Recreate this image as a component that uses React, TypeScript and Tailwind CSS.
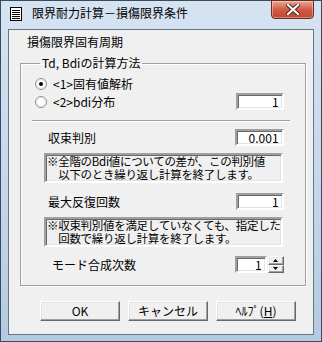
import clsx from 'clsx'

const font = 'font-["Noto_Sans_CJK_JP","Noto_Sans",sans-serif]'
const sunken =
  'border-2 border-t-[#a0a0a0] border-l-[#a0a0a0] border-b-white border-r-white shadow-[inset_1px_1px_0_#696969,inset_-1px_-1px_0_#e3e3e3]'
const raised =
  'border border-t-white border-l-white border-b-[#696969] border-r-[#696969] shadow-[inset_-1px_-1px_0_#a0a0a0,inset_1px_1px_0_#e3e3e3] bg-[#f0f0f0]'

function Radio({ checked }: { checked?: boolean }) {
  return (
    <svg width="12" height="12" viewBox="0 0 12 12" className="shrink-0">
      <circle cx="6" cy="6" r="5.5" fill="#fff" stroke="#8d8d8d" />
      <circle cx="6" cy="6" r="4.5" fill="none" stroke="#e0e0e0" />
      {checked && <circle cx="6" cy="6" r="2" fill="#000" />}
    </svg>
  )
}

function NumBox({ value, w = 'w-[48px]' }: { value: string; w?: string }) {
  return (
    <div className={clsx(sunken, w, 'h-[17px] bg-white flex items-center justify-end pr-[3px] text-[12px] leading-[13px]')}>
      {value}
    </div>
  )
}

function Note({ lines }: { lines: string[] }) {
  return (
    <div className={clsx(sunken, 'h-[30px] ml-[9px] mr-[1px] pl-[1px] text-[11.5px] leading-[13px] tracking-[-0.3px] whitespace-nowrap overflow-hidden')}>
      {lines.map((l) => (
        <div key={l}>{l}</div>
      ))}
    </div>
  )
}

export default function App() {
  return (
    <div className={clsx(font, 'w-[322px] h-[342px] border border-[#3b4b5e] bg-gradient-to-b from-[#d6e3f1] via-[#c6d8ec] to-[#b4cae2] flex flex-col text-black')}>
      {/* title bar */}
      <div className="h-[28px] flex items-start shrink-0">
        <svg width="12" height="14" viewBox="0 0 12 14" className="ml-[9px] mt-[6px]">
          <rect x="0.5" y="0.5" width="11" height="13" fill="#fff" stroke="#000" />
          {[3, 5, 7, 9, 11].map((y) => (
            <line key={y} x1="2" x2="10" y1={y + 0.5} y2={y + 0.5} stroke="#000" />
          ))}
        </svg>
        <span className="ml-[10px] mt-[5px] text-[12px] leading-[14px]">限界耐力計算－損傷限界条件</span>
        <div className="ml-auto mr-[7px] -mt-px w-[43px] h-[19px] rounded-b-[4px] border border-[#6e2a20] bg-gradient-to-b from-[#e7a898] via-[#d05b44] to-[#c2462c] shadow-[inset_0_0_0_1px_rgba(255,255,255,0.35)] flex items-center justify-center">
          <svg width="14" height="11" viewBox="0 0 14 11">
            <path d="M2 1 L12 10 M12 1 L2 10" stroke="#4a1f18" strokeWidth="4" strokeLinecap="square" />
            <path d="M2 1 L12 10 M12 1 L2 10" stroke="#fff" strokeWidth="2.2" strokeLinecap="square" />
          </svg>
        </div>
      </div>

      {/* client area */}
      <div className="mx-[7px] h-[306px] shrink-0 border border-[#66768a] bg-[#f0f0f0] flex flex-col">
        <div className="pl-[18px] pt-[5px] text-[12px] leading-[14px]">損傷限界固有周期</div>

        <fieldset className="mt-[7px] ml-[11px] w-[279px] border border-[#a0a0a0] shadow-[inset_1px_1px_0_#fff,1px_1px_0_#fff] pb-[12px] pl-[14px] pr-[21px] text-[12px]">
          <legend className="ml-[5px] px-[2px] leading-[14px]">Td, Bdiの計算方法</legend>

          <div className="mt-[7px] h-[14px] flex items-center gap-[6px] leading-[14px]">
            <Radio checked />
            <span>&lt;1&gt;固有値解析</span>
          </div>

          <div className="mt-[2px] h-[17px] flex items-center justify-between leading-[14px]">
            <div className="flex items-center gap-[6px]">
              <Radio />
              <span>&lt;2&gt;bdi分布</span>
            </div>
            <NumBox value="1" />
          </div>

          <div className="mt-[10px] -ml-[3px] -mr-[6px] border-t border-b border-t-[#a0a0a0] border-b-white" />

          <div className="mt-[7px] h-[17px] flex items-center justify-between leading-[14px]">
            <span className="ml-[13px]">収束判別</span>
            <NumBox value="0.001" w="w-[49px]" />
          </div>

          <div className="mt-[7px]">
            <Note lines={['※全階のBdi値についての差が、この判別値', '　以下のとき繰り返し計算を終了します。']} />
          </div>

          <div className="mt-[10px] h-[17px] flex items-center justify-between leading-[14px]">
            <span className="ml-[13px]">最大反復回数</span>
            <NumBox value="1" />
          </div>

          <div className="mt-[7px]">
            <Note lines={['※収束判別値を満足していなくても、指定した', '　回数で繰り返し計算を終了します。']} />
          </div>

          <div className="mt-[9px] h-[17px] flex items-center justify-between leading-[14px]">
            <span className="ml-[17px]">モード合成次数</span>
            <div className="flex items-center">
              <NumBox value="1" w="w-[32px]" />
              <div className="ml-px w-[16px] h-[17px] flex flex-col">
                <div className={clsx(raised, 'h-[8.5px] flex items-center justify-center')}>
                  <svg width="5" height="3" viewBox="0 0 5 3"><path d="M2.5 0 L5 3 L0 3 Z" fill="#000" /></svg>
                </div>
                <div className={clsx(raised, 'h-[8.5px] flex items-center justify-center')}>
                  <svg width="5" height="3" viewBox="0 0 5 3"><path d="M0 0 L5 0 L2.5 3 Z" fill="#000" /></svg>
                </div>
              </div>
            </div>
          </div>
        </fieldset>

        <div className="mt-[15px] ml-[31px] flex gap-[8px] text-[12px] leading-[14px]">
          {['OK', 'キャンセル'].map((t) => (
            <div key={t} className={clsx(raised, 'w-[80px] h-[20px] flex items-center justify-center')}>
              {t}
            </div>
          ))}
          <div className={clsx(raised, 'w-[80px] h-[20px] flex items-center justify-center')}>
            ﾍﾙﾌﾟ(<span className="underline">H</span>)
          </div>
        </div>
      </div>
    </div>
  )
}
